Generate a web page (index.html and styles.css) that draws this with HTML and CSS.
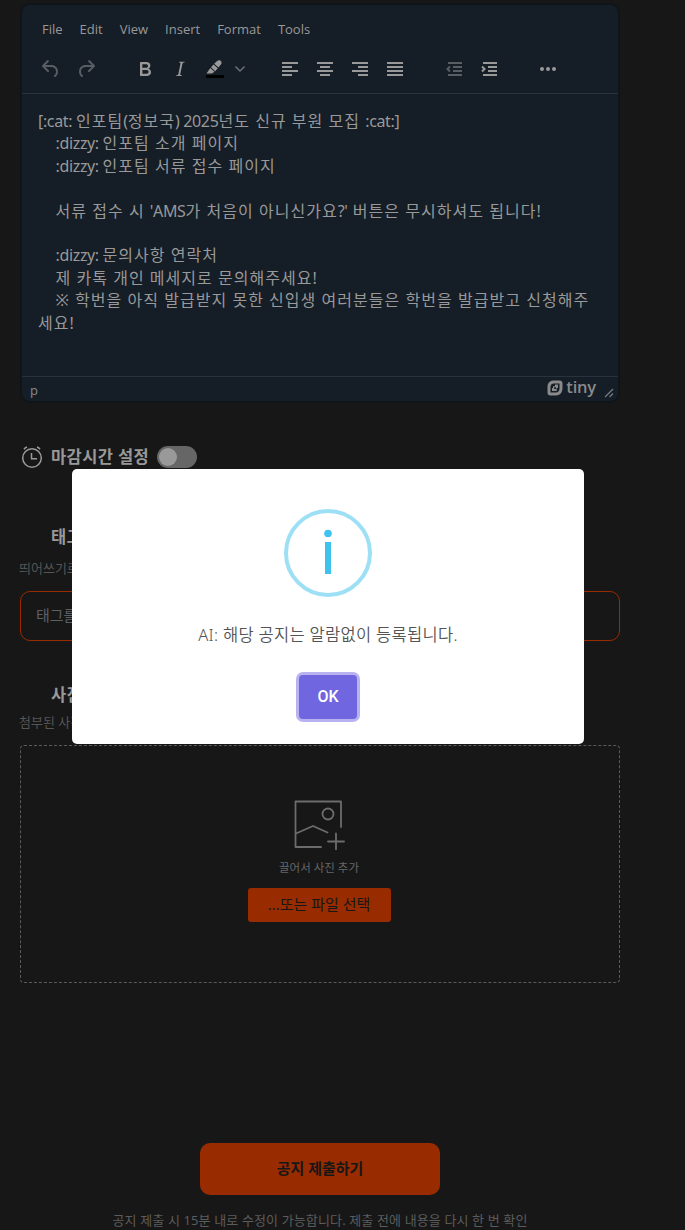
FILE: index.html
```
<!DOCTYPE html>
<html lang="ko">
<head>
<meta charset="utf-8">
<title>공지 작성</title>
<link rel="stylesheet" href="styles.css">
</head>
<body>
<main class="page">
  <section class="editor">
    <nav class="menubar">
      <span>File</span><span>Edit</span><span>View</span><span>Insert</span><span>Format</span><span>Tools</span>
    </nav>
    <div class="toolbar">
      <div class="group dim">
        <svg viewBox="0 0 24 24"><path d="M6.4 8H12c3.700 0 6.200 2 6.800 5.100.6 2.700-.4 5.600-2.300 6.800a1 1 0 0 1-1-1.800c1.100-.6 1.800-2.700 1.400-4.600-.5-2.100-2.100-3.500-4.900-3.500H6.400l3.300 3.300a1 1 0 1 1-1.400 1.400l-5-5a1 1 0 0 1 0-1.400l5-5a1 1 0 0 1 1.400 1.400L6.400 8Z"/></svg>
        <svg viewBox="0 0 24 24"><path transform="translate(24 0) scale(-1 1)" d="M6.4 8H12c3.700 0 6.200 2 6.800 5.100.6 2.700-.4 5.600-2.300 6.800a1 1 0 0 1-1-1.800c1.100-.6 1.800-2.700 1.400-4.600-.5-2.100-2.100-3.500-4.900-3.500H6.400l3.300 3.300a1 1 0 1 1-1.400 1.400l-5-5a1 1 0 0 1 0-1.400l5-5a1 1 0 0 1 1.400 1.400L6.400 8Z"/></svg>
      </div>
      <div class="group">
        <svg viewBox="0 0 24 24"><path d="M7.800 19c-.3 0-.5 0-.6-.2l-.2-.5V5.700c0-.2 0-.4.2-.5l.6-.2h5c1.500 0 2.700.3 3.500 1 .7.6 1.100 1.400 1.100 2.500a3 3 0 0 1-.6 1.900c-.4.6-1 1-1.600 1.200.4.1.9.3 1.300.6s.8.7 1 1.200c.4.4.5 1 .5 1.600 0 1.300-.4 2.300-1.300 3-.8.7-2.100 1-3.800 1H7.800Zm5-8.300c.6 0 1.200-.1 1.600-.5.4-.3.6-.7.6-1.300 0-1.100-.8-1.700-2.300-1.700H9.300v3.500h3.400Zm.5 6c.7 0 1.300-.1 1.700-.4.4-.4.6-.9.6-1.500s-.2-1-.7-1.400c-.4-.3-1-.4-2-.4H9.400v3.800h4Z"/></svg>
        <svg viewBox="0 0 24 24"><path d="m16.700 4.700-.1.900h-.3c-.6 0-1 0-1.400.3-.3.3-.4.600-.5 1.100l-2.100 9.800v.6c0 .5.4.8 1.400.8h.2l-.2.8H8l.2-.8h.2c1.100 0 1.800-.5 2-1.500l2-9.800.1-.5c0-.6-.4-.8-1.400-.8h-.3l.2-.9h5.800Z"/></svg>
        <svg viewBox="0 0 24 24"><path class="ink" d="M3 18h18v3H3z"/><path d="M3.500 16.500 7.300 11l4.200 3.800c-1.700 1.700-3.500 2-8 1.700ZM8 10.200l2.500-2.800 4.300 3.900-2.600 2.900ZM11.200 6.700l2.900-2.600c1-.9 2-1 3-.5.800.4 1.500 1.200 1.500 2.200 0 .8-.3 1.300-.9 1.900l-2.200 2.900Z"/></svg>
        <svg class="chev" viewBox="0 0 12 24"><path d="m1.500 9.500 4.500 4.500 4.500-4.500"/></svg>
      </div>
      <div class="group">
        <svg viewBox="0 0 24 24"><path d="M4 5h16v2H4zM4 9h10v2H4zM4 13h16v2H4zM4 17h10v2H4z"/></svg>
        <svg viewBox="0 0 24 24"><path d="M4 5h16v2H4zM7 9h10v2H7zM4 13h16v2H4zM7 17h10v2H7z"/></svg>
        <svg viewBox="0 0 24 24"><path d="M4 5h16v2H4zM10 9h10v2H10zM4 13h16v2H4zM10 17h10v2H10z"/></svg>
        <svg viewBox="0 0 24 24"><path d="M4 5h16v2H4zM4 9h16v2H4zM4 13h16v2H4zM4 17h16v2H4z"/></svg>
      </div>
      <div class="group indents">
        <svg class="dim" viewBox="0 0 24 24"><path d="M5 5h14v2H5zM10 9h9v2h-9zM10 13h9v2h-9zM5 17h14v2H5z"/><path class="arrow" d="m7 9.500-2.500 2.500 2.500 2.500"/></svg>
        <svg viewBox="0 0 24 24"><path d="M5 5h14v2H5zM10 9h9v2h-9zM10 13h9v2h-9zM5 17h14v2H5z"/><path class="arrow" d="m4 9.500 2.500 2.500-2.500 2.500"/></svg>
      </div>
      <div class="group">
        <svg viewBox="0 0 24 24"><circle cx="6" cy="12" r="2"/><circle cx="12" cy="12" r="2"/><circle cx="18" cy="12" r="2"/></svg>
      </div>
    </div>
    <div class="content">
      <div><span class="latin">[:cat: </span>인포팀<span class="latin">(</span>정보국<span class="latin">) 2025</span>년도 신규 부원 모집 <span class="latin">:cat:]</span></div>
      <div class="in"><span class="latin">:dizzy: </span>인포팀 소개 페이지</div>
      <div class="in"><span class="latin">:dizzy: </span>인포팀 서류 접수 페이지</div>
      <div></div>
      <div class="in">서류 접수 시 <span class="latin">'AMS</span>가 처음이 아니신가요<span class="latin">?'</span> 버튼은 무시하셔도 됩니다!</div>
      <div></div>
      <div class="in"><span class="latin">:dizzy: </span>문의사항 연락처</div>
      <div class="in">제 카톡 개인 메세지로 문의해주세요!</div>
      <div class="in">※ 학번을 아직 발급받지 못한 신입생 여러분들은 학번을 발급받고 신청해주</div>
      <div>세요!</div>
    </div>
    <footer class="status">
      <span class="crumb">p</span>
      <span class="brand">
        <svg viewBox="0 0 16 16"><path fill-rule="evenodd" d="M6 .5h6.500A3 3 0 0 1 15.500 3.500V8c0 4.500-2.500 7.500-6.500 7.500H3.500a3 3 0 0 1-3-3V7C.5 3 3 .8 6 .5ZM6.500 3.500C4.500 3.800 3.500 5 3.500 7v5.500H9c2-.2 3.500-1.500 3.500-4v-5Z"/><path d="M6 6.200h2V4.500h3V8H9.700v3H5V8h1Z"/><path class="hole" d="M7.200 7.200h1.800v1.800H7.200z"/></svg>
        <b>tiny</b>
      </span>
      <svg class="grip" viewBox="0 0 10 10"><path d="M1 9 9 1M5.500 9 9 5.500"/></svg>
    </footer>
  </section>

  <section class="deadline">
    <svg class="clock" viewBox="0 0 22 24"><circle cx="11" cy="13" r="9.300"/><path d="M10.500 8v5.700h5.500M3 4.300C3.800 3.200 4.800 2.500 6 2M16 2c1.200.5 2.200 1.200 3 2.300"/></svg>
    <h2>마감시간 설정</h2>
    <span class="switch"><i></i></span>
  </section>

  <section class="tags">
    <h2>태그</h2>
    <p>띄어쓰기로 구분</p>
    <div class="field">태그를 입력하세요</div>
  </section>

  <section class="photos">
    <h2>사진</h2>
    <p>첨부된 사진</p>
    <div class="drop">
      <svg class="picture" viewBox="0 0 52 52"><path d="M28 49H2.500V3.500H48V29M3 35.500l17-7.500 14.500 6.500M35 43.500h16M43 35.500v16"/><circle cx="35" cy="16" r="5.500"/></svg>
      <span class="hint">끌어서 사진 추가</span>
      <button class="pick">...또는 파일 선택</button>
    </div>
  </section>

  <button class="submit">공지 제출하기</button>
  <p class="note">공지 제출 시 15분 내로 수정이 가능합니다. 제출 전에 내용을 다시 한 번 확인</p>
</main>

<div class="modal">
  <svg class="info" viewBox="0 0 88 88"><circle class="ring" cx="44" cy="44" r="42"/><circle cx="44" cy="24.500" r="3.800"/><path d="M41 33h6v32h-6z"/></svg>
  <p class="message">AI: 해당 공지는 알람없이 등록됩니다.</p>
  <button class="ok">OK</button>
</div>
</body>
</html>
```
FILE: styles.css
```
* { box-sizing: border-box; }
html, body { margin: 0; height: 1230px; overflow: hidden; }
body {
  position: relative;
  background: #171717;
  color: #999;
  font-family: "Noto Sans", "Noto Sans CJK KR", sans-serif;
}
h2, p { margin: 0; white-space: nowrap; }
button { border: 0; padding: 0; font-family: inherit; }
svg { flex: none; display: block; fill: currentColor; }

.page { display: flex; flex-direction: column; width: 600px; margin-left: 20px; padding-top: 3px; }

.editor {
  height: 400px;
  display: flex;
  flex-direction: column;
  border: 2px solid #10151a;
  border-radius: 10px;
  background: #151d26;
}
.menubar { display: flex; gap: 17px; height: 47px; padding: 1px 0 0 20px; align-items: center; font-family: "Open Sans", sans-serif; font-size: 13px; }
.toolbar { display: flex; gap: 35px; height: 42px; padding: 5px 0 0 17px; border-bottom: 1px solid #2a333d; }
.group { display: flex; gap: 11px; height: 24px; }
.group svg { width: 24px; height: 24px; }
.indents { margin: 0 -1px 0 1px; }
.dim { color: #595e64; }
.ink { fill: #000; }
.group .chev { width: 12px; margin: 0 -3px 0 -4px; fill: none; stroke: #6b7076; stroke-width: 1.5; }
.arrow { fill: none; stroke: currentColor; stroke-width: 2; }
.content { height: 282px; padding: 16px; font-size: 16px; line-height: 22.4px; letter-spacing: 1.03px; white-space: pre; }
.content div { height: 22.4px; white-space: pre; }
.content { white-space: normal; }
.content .in { padding-left: 17.5px; }
.latin { letter-spacing: -.35px; }
.status { position: relative; display: flex; align-items: center; flex: 1; border-top: 1px solid #2a333d; padding: 0 22px 0 8px; }
.crumb { margin-top: 2px; font-family: "Open Sans", sans-serif; font-size: 13px; color: #858a8f; }
.brand { display: flex; gap: 3px; margin-left: auto; align-items: center; height: 16px; margin-top: -3px; color: #8a8a8a; }
.brand svg { width: 16px; height: 16px; }
.brand b { font: 600 16.5px/16px "Open Sans", sans-serif; margin-top: -2px; letter-spacing: -.2px; }
.hole { fill: #151d26; }
.grip { position: absolute; right: 4px; bottom: 3px; width: 10px; height: 10px; stroke: #777c80; stroke-width: 1.2; }

h2 { font-size: 16.5px; line-height: 24px; font-weight: 700; letter-spacing: .4px; color: #999; }
.deadline { display: flex; align-items: center; height: 24px; margin-top: 42px; }
.clock { width: 22px; height: 24px; margin: 0 8px 0 1px; fill: none; stroke: #999; stroke-width: 1.5; }
.switch { width: 40px; height: 22px; border-radius: 11px; background: #666; margin-left: 8px; padding: 2px; }
.switch i { display: block; width: 18px; height: 18px; border-radius: 9px; background: #999; }
.tags { margin-top: 56px; }
.tags h2, .photos h2 { padding-left: 31px; }
.tags p, .photos p { margin-left: -1px; font-size: 13px; line-height: 20px; color: #555; }
.tags p { margin-top: 9px; }
.field { height: 50px; margin-top: 13px; border: 1px solid #992b00; border-radius: 10px; padding-left: 15px; font-size: 15px; line-height: 46px; color: #5b6066; }
.photos { margin-top: 42px; }
.photos p { margin-top: 5px; }
.drop { display: flex; flex-direction: column; align-items: center; height: 238px; margin-top: 13px; padding: 52px 2px 0 0; border: 1px dashed #5a5a5a; border-radius: 4px; }
.picture { width: 52px; height: 52px; fill: none; stroke: #6c6c6c; stroke-width: 1.8; stroke-linecap: round; stroke-linejoin: round; }
.hint { margin-top: 9px; font-size: 11.5px; line-height: 18px; color: #666; }
.pick { width: 143px; height: 34px; margin-top: 11px; padding-bottom: 4px; border-radius: 3px; background: #992b00; font-size: 15px; color: #171717; }
.submit { align-self: center; width: 240px; height: 52px; margin-top: 160px; padding-bottom: 4px; border-radius: 10px; background: #992b00; color: #171717; font-size: 15px; font-weight: 700; }
.note { align-self: center; margin-top: 15px; font-size: 13px; line-height: 20px; letter-spacing: .13px; color: #5c5c5c; }

.modal {
  position: absolute;
  left: 72px;
  top: 469px;
  width: 512px;
  height: 275px;
  display: flex;
  flex-direction: column;
  align-items: center;
  padding-top: 40px;
  border-radius: 5px;
  background: #fff;
}
.info { width: 88px; height: 88px; color: #3fc3ee; }
.ring { fill: none; stroke: #9de0f6; stroke-width: 4; }
.message { margin-top: 26px; font-size: 16.5px; line-height: 24px; font-weight: 350; letter-spacing: .3px; color: #545454; }
.ok { width: 58px; height: 44px; margin-top: 28px; padding-bottom: 2px; border-radius: 4px; background: #7066e0; box-shadow: 0 0 0 3px #b8b3f0; color: #fff; font: 500 16px Roboto, sans-serif; }
```
